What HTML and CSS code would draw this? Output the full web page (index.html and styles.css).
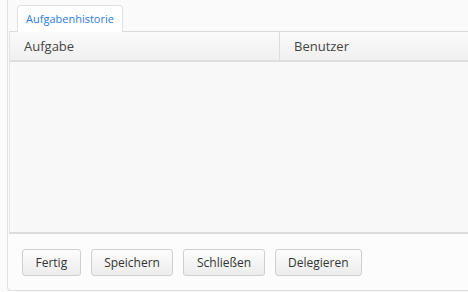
FILE: index.html
```html
<!DOCTYPE html>
<html lang="de">
<head>
    <meta charset="UTF-8">
    <meta name="viewport" content="width=device-width, initial-scale=1.0">
    <title>Aufgabenhistorie</title>
    <link rel="stylesheet" href="styles.css">
</head>
<body>

    <div class="panel">
        <div class="tabs">
            <span class="tab active">Aufgabenhistorie</span>
        </div>

        <div class="grid">
            <div class="grid-head">
                <div class="col col-task">Aufgabe</div>
                <div class="col col-user">Benutzer</div>
            </div>
            <div class="grid-body"></div>
        </div>

        <div class="toolbar">
            <button class="btn">Fertig</button>
            <button class="btn">Speichern</button>
            <button class="btn">Schließen</button>
            <button class="btn">Delegieren</button>
        </div>
    </div>

</body>
</html>
```

FILE: styles.css
```css
body {
    margin: 0;
    background-color: #fafafa;
    font-family: "Open Sans", "Liberation Sans", sans-serif;
    color: #333;
}
.panel {
    margin-left: 7px;
    width: 480px;
    height: 290px;
    border-left: 1px solid #dedede;
    border-bottom: 1px solid #dedede;
    border-bottom-left-radius: 4px;
    background-color: #fafafa;
    display: flex;
    flex-direction: column;
}
.tabs {
    display: flex;
    padding: 5px 0 0 8px;
    margin-left: 1px;
    border-bottom: 1px solid #dcdcdc;
}
.tab {
    font-size: 11px;
    line-height: 26px;
    padding: 0 8px;
    margin-bottom: -1px;
    border: 1px solid #e0e0e0;
    border-bottom: none;
    border-radius: 4px 4px 0 0;
    color: #2f7be0;
    background-color: #fff;
}
.grid {
    flex: 1;
    display: flex;
    flex-direction: column;
    margin-left: 1px;
    border-left: 1px solid #e4e4e4;
    border-bottom: 2px solid #dcdcdc;
}
.grid-head {
    display: flex;
    height: 28px;
    border-bottom: 2px solid #dedede;
    background: linear-gradient(#fafafa, #f0f0f0);
    font-size: 13px;
    color: #444;
}
.col {
    padding-left: 14px;
    line-height: 28px;
}
.col-task {
    width: 255px;
    border-right: 1px solid #dcdcdc;
}
.grid-body {
    flex: 1;
    background-color: #f8f8f8;
}
.toolbar {
    display: flex;
    gap: 10px;
    padding: 15px 0 14px 14px;
    background-color: #fcfcfc;
    border-bottom-left-radius: 4px;
}
.btn {
    font-family: inherit;
    font-size: 12px;
    color: #333;
    height: 27px;
    padding: 0 12.5px;
    border: 1px solid #cfcfcf;
    border-radius: 3px;
    background: linear-gradient(#fdfdfd, #ececec);
}
```
